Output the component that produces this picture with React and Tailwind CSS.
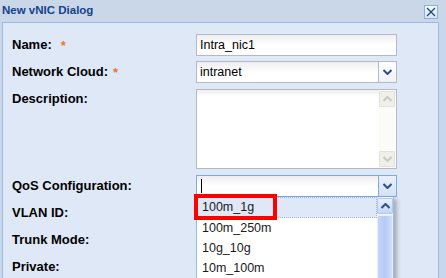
import React from "react";

const Chevron = ({ color = "#2d4d8a", up = false }) => (
  <svg width="9" height="6" viewBox="0 0 9 6" className="block">
    {up ? (
      <path d="M0.5 5 L4.5 1 L8.5 5" fill="none" stroke={color} strokeWidth="2" />
    ) : (
      <path d="M0.5 1 L4.5 5 L8.5 1" fill="none" stroke={color} strokeWidth="2" />
    )}
  </svg>
);

const Label = ({ children, req, gap = "ml-[6px]" }) => (
  <div className="w-[184px] shrink-0 h-[22px] flex items-center text-[13px] font-bold text-black">
    <span>{children}</span>
    {req && <span className={`${gap} text-[#e8782a] text-[13px] leading-none`}>*</span>}
  </div>
);

export default function App() {
  const sans = { fontFamily: '"Liberation Sans", Arial, sans-serif' };
  return (
    <div
      className="w-[446px] h-[278px] overflow-hidden bg-[#c9d7e8] flex flex-col relative"
      style={{ fontFamily: '"Liberation Sans", Arial, sans-serif' }}
    >
      {/* header */}
      <div className="h-[22px] shrink-0 flex items-center pl-[2px] pr-[8px] justify-between">
        <span className="text-[11.5px] font-bold text-[#15428b]">New vNIC Dialog</span>
        <div className="w-[14px] h-[14px] mt-[1px] border border-[#8fb0dc] bg-gradient-to-b from-[#f4f8fd] to-[#dbe6f4] flex items-center justify-center">
          <svg width="10" height="10" viewBox="0 0 10 10">
            <path d="M1 1 L9 9 M9 1 L1 9" stroke="#15428b" strokeWidth="1.2" />
          </svg>
        </div>
      </div>

      {/* body */}
      <div className="ml-[2px] mr-[7px] flex-1 border-l border-t border-r border-[#99bbe8] bg-[#dfe8f6] pl-[9px] pt-[11px] relative">
        {/* Name */}
        <div className="flex mb-[5px]">
          <Label req gap="ml-[9px]">Name:</Label>
          <div
            className="w-[201px] h-[22px] border border-[#b5b8c8] bg-gradient-to-b from-[#eeeeee] via-white to-white flex items-center pl-[3px] text-[12.5px] text-black"
            style={sans}
          >
            Intra_nic1
          </div>
        </div>
        {/* Network Cloud */}
        <div className="flex mb-[6px]">
          <Label req gap="ml-[5px]">Network Cloud:</Label>
          <div className="w-[201px] h-[22px] border border-[#b5b8c8] bg-white flex">
            <div className="flex-1 flex items-center pl-[3px] text-[12.5px] text-black bg-gradient-to-b from-[#eeeeee] via-white to-white" style={sans}>
              intranet
            </div>
            <div className="w-[18px] border-l border-[#b5b8c8] bg-gradient-to-b from-white to-[#eef2f7] flex items-center justify-center">
              <Chevron />
            </div>
          </div>
        </div>
        {/* Description */}
        <div className="flex mb-[6px]">
          <div className="w-[184px] shrink-0 text-[13px] font-bold text-black h-[20px] flex items-center">
            Description:
          </div>
          <div className="w-[201px] h-[80px] border border-[#b5b8c8] bg-gradient-to-b from-[#eeeeee] via-white via-[8%] to-white flex justify-end pr-[1px]">
            <div className="w-[16px] h-full bg-[#fbfbf8] flex flex-col justify-between py-[1px]">
              <div className="h-[16px] border border-[#e2e2da] bg-[#f0f0ea] rounded-[1px] flex items-center justify-center">
                <Chevron color="#c9c9c0" up />
              </div>
              <div className="h-[16px] border border-[#e2e2da] bg-[#f0f0ea] rounded-[1px] flex items-center justify-center">
                <Chevron color="#c9c9c0" />
              </div>
            </div>
          </div>
        </div>
        {/* QoS */}
        <div className="flex mb-[5px]">
          <Label>QoS Configuration:</Label>
          <div className="relative w-[201px] h-[22px]">
            <div className="w-full h-full border border-[#7eadd9] bg-white flex">
              <div className="flex-1 flex items-center pl-[4px] bg-gradient-to-b from-[#eeeeee] via-white to-white">
                <div className="w-[1px] h-[14px] bg-black" />
              </div>
              <div className="w-[18px] border-l border-[#7eadd9] bg-gradient-to-b from-[#eaf1fb] to-[#d3e2f5] flex items-center justify-center">
                <Chevron />
              </div>
            </div>
            {/* dropdown list */}
            <div className="absolute left-0 top-[22px] w-[198px] h-[90px] border-l border-r border-[#99bbe8] bg-white shadow-[3px_2px_4px_rgba(0,0,0,0.25)] z-10 flex">
              <div className="flex-1 flex flex-col text-[12.5px] text-[#1a1a1a]" style={sans}>
                <div className="h-[21px] bg-[#dfe8f6] border border-dotted border-[#a3bae9] flex items-center pl-[4px]">100m_1g</div>
                <div className="h-[20px] flex items-center pl-[5px]">100m_250m</div>
                <div className="h-[20px] flex items-center pl-[5px]">10g_10g</div>
                <div className="h-[20px] flex items-center pl-[5px]">10m_100m</div>
              </div>
              <div className="w-[16px] flex flex-col pt-[1px] bg-[#f4f7fd]">
                <div className="h-[16px] border border-[#b5c8ea] bg-gradient-to-b from-[#e8effc] to-[#c6d6f6] rounded-[1px] flex items-center justify-center">
                  <Chevron color="#2d4d8a" up />
                </div>
                <div className="flex-1 mt-[1px] border border-[#e8eefa] bg-gradient-to-r from-[#c4d5fa] via-[#b7cbf7] to-[#d2def9] rounded-[1px]" />
              </div>
            </div>
            {/* red highlight */}
            <div className="absolute left-[-2px] top-[19px] w-[83px] h-[26px] border-4 border-[#ff0000] z-20" />
          </div>
        </div>
        <div className="flex mb-[5px]">
          <Label>VLAN ID:</Label>
        </div>
        <div className="flex mb-[5px]">
          <Label>Trunk Mode:</Label>
        </div>
        <div className="flex mb-[5px]">
          <Label>Private:</Label>
        </div>
      </div>
    </div>
  );
}
